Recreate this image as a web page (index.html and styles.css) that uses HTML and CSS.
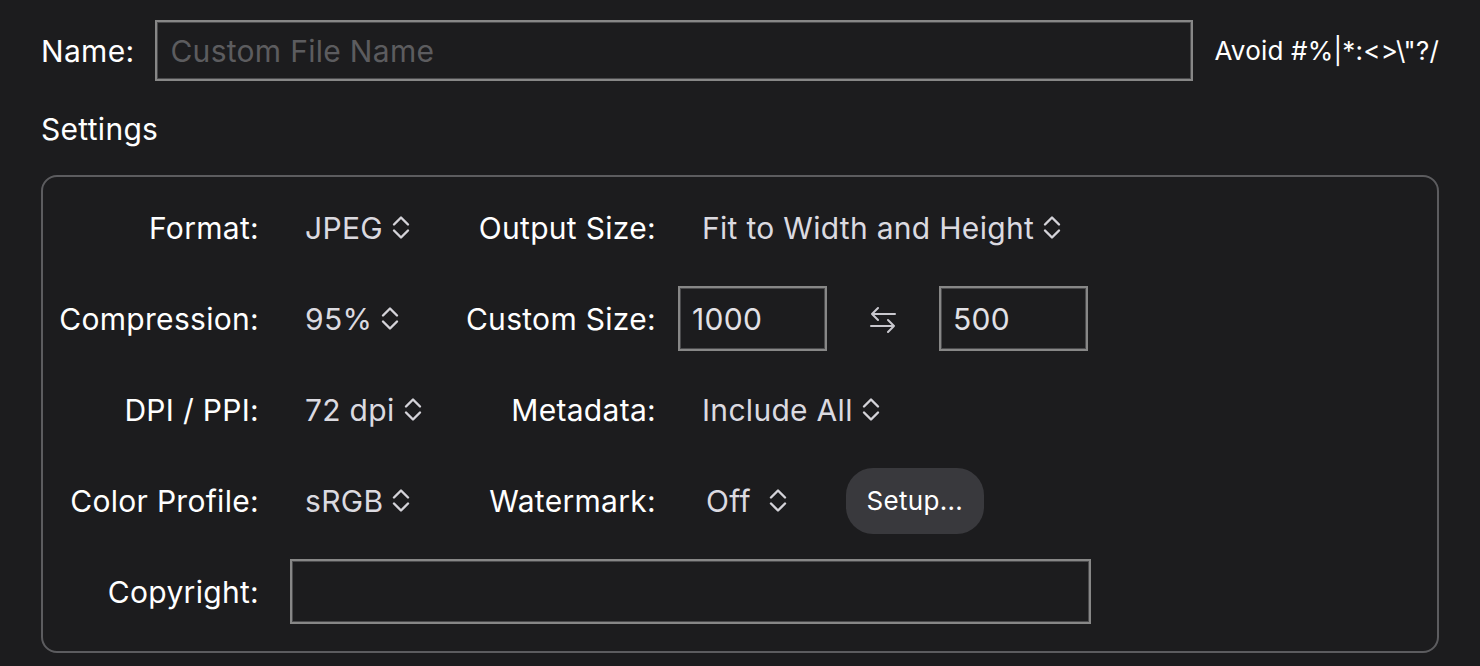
FILE: index.html
```html
<!DOCTYPE html>
<html lang="en">
<head>
<meta charset="utf-8">
<title>Export Settings</title>
<link rel="stylesheet" href="styles.css">
</head>
<body>
<div class="page">
  <div class="name-row">
    <span class="name-label">Name:</span>
    <div class="field name-field"><span class="placeholder">Custom File Name</span></div>
    <span class="hint">Avoid #%|*:&lt;&gt;\"?/</span>
  </div>
  <div class="section-title">Settings</div>
  <div class="panel">
    <div class="grid">
      <div class="lbl">Format:</div>
      <div class="cell2"><span class="popup">JPEG<svg class="chev" viewBox="0 0 18 25"><path d="M2 9.5 L9 2.5 L16 9.5 M2 15.5 L9 22.5 L16 15.5"/></svg></span></div>
      <div class="lbl">Output Size:</div>
      <div class="cell4"><span class="popup">Fit to Width and Height<svg class="chev" viewBox="0 0 18 25"><path d="M2 9.5 L9 2.5 L16 9.5 M2 15.5 L9 22.5 L16 15.5"/></svg></span></div>

      <div class="lbl">Compression:</div>
      <div class="cell2"><span class="popup">95%<svg class="chev" viewBox="0 0 18 25"><path d="M2 9.5 L9 2.5 L16 9.5 M2 15.5 L9 22.5 L16 15.5"/></svg></span></div>
      <div class="lbl">Custom Size:</div>
      <div class="cell4 size-cell">
        <div class="field size-field">1000</div>
        <svg class="swap" viewBox="0 0 26 28"><path d="M25 9 H2 M8 3 L2 9 L8 15 M1 21 H24 M18 15 L24 21 L18 27"/></svg>
        <div class="field size-field">500</div>
      </div>

      <div class="lbl">DPI / PPI:</div>
      <div class="cell2"><span class="popup">72 dpi<svg class="chev" viewBox="0 0 18 25"><path d="M2 9.5 L9 2.5 L16 9.5 M2 15.5 L9 22.5 L16 15.5"/></svg></span></div>
      <div class="lbl">Metadata:</div>
      <div class="cell4"><span class="popup">Include All<svg class="chev" viewBox="0 0 18 25"><path d="M2 9.5 L9 2.5 L16 9.5 M2 15.5 L9 22.5 L16 15.5"/></svg></span></div>

      <div class="lbl">Color Profile:</div>
      <div class="cell2"><span class="popup">sRGB<svg class="chev" viewBox="0 0 18 25"><path d="M2 9.5 L9 2.5 L16 9.5 M2 15.5 L9 22.5 L16 15.5"/></svg></span></div>
      <div class="lbl">Watermark:</div>
      <div class="cell4 wm-cell">
        <span class="popup popup-off">Off<svg class="chev" viewBox="0 0 18 25"><path d="M2 9.5 L9 2.5 L16 9.5 M2 15.5 L9 22.5 L16 15.5"/></svg></span>
        <span class="btn">Setup...</span>
      </div>

      <div class="lbl">Copyright:</div>
      <div class="copy-cell"><div class="field copy-field"></div></div>
    </div>
  </div>
</div>
</body>
</html>
```

FILE: styles.css
```css
html, body {
  margin: 0;
  padding: 0;
  background: #1c1c1e;
}

body {
  font-family: Inter, "Noto Sans", "Liberation Sans", sans-serif;
  color: #ffffff;
  font-size: 30px;
  letter-spacing: 0.3px;
}

.page {
  padding: 20px 41px 0 41px;
}

.name-row {
  display: flex;
  align-items: center;
  gap: 21px;
  height: 61px;
}

.field {
  box-sizing: border-box;
  border: 2px solid #878787;
  box-shadow: inset 0 0 0 1px #4a4a4c;
  background: #1c1c1e;
}

.name-field {
  flex: 1;
  height: 61px;
  display: flex;
  align-items: center;
  padding-left: 13px;
}

.placeholder {
  color: #5c5c5f;
}

.hint {
  font-size: 26px;
  letter-spacing: 0.2px;
}

.section-title {
  margin-top: 30px;
  line-height: 36px;
  height: 36px;
  margin-bottom: 28px;
}

.panel {
  border: 2px solid #5c5c5f;
  border-radius: 16px;
  padding: 18px 0 27px 0;
}

.grid {
  display: grid;
  grid-template-columns: 216px 201px 196px 1fr;
  grid-auto-rows: 65px;
  row-gap: 26px;
  align-items: center;
}

.lbl {
  text-align: right;
  white-space: nowrap;
}

.cell2 {
  padding-left: 46px;
}

.cell4 {
  padding-left: 46px;
}

.popup {
  display: inline-flex;
  align-items: center;
  gap: 9px;
  color: #dbdae0;
  white-space: nowrap;
}

.chev {
  width: 18px;
  height: 25px;
  fill: none;
  stroke: #d4d3d9;
  stroke-width: 2.4;
  stroke-linecap: round;
  stroke-linejoin: round;
}

.size-cell {
  padding-left: 22px;
  display: flex;
  align-items: center;
}

.size-field {
  width: 149px;
  height: 65px;
  display: flex;
  align-items: center;
  padding-left: 12px;
  color: #e2e1e6;
}

.swap {
  width: 26px;
  height: 28px;
  margin: 0 43px;
  fill: none;
  stroke: #c9c8ce;
  stroke-width: 2;
  stroke-linecap: round;
  stroke-linejoin: round;
}

.wm-cell {
  display: flex;
  align-items: center;
}

.popup-off {
  gap: 18px;
  padding-left: 4px;
}

.btn {
  margin-left: 59px;
  box-sizing: border-box;
  width: 138px;
  height: 66px;
  border-radius: 27px;
  background: #39393d;
  display: flex;
  align-items: center;
  justify-content: center;
  font-size: 26px;
  color: #ffffff;
}

.copy-cell {
  grid-column: 2 / -1;
  padding-left: 31px;
}

.copy-field {
  width: 801px;
  height: 65px;
}
```
